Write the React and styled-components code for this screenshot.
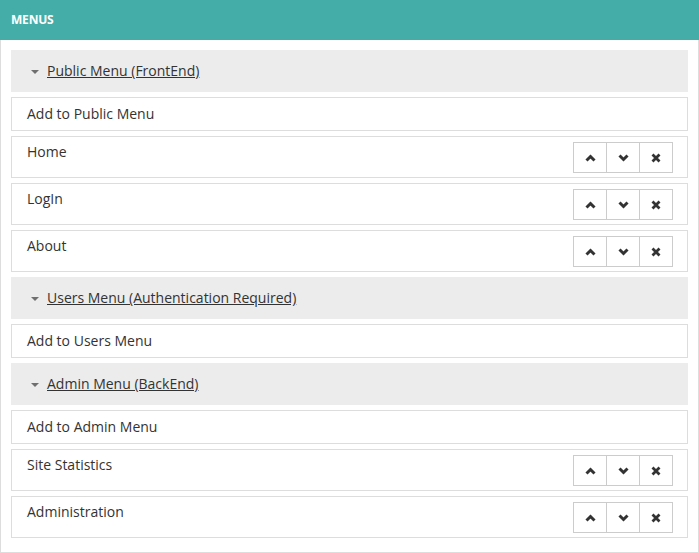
import React from 'react';
import styled, {createGlobalStyle} from 'styled-components';

const GlobalStyle = createGlobalStyle`
    html, body {
        margin: 0;
        padding: 0;
        background: #fff;
    }
    body {
        font-family: "Open Sans", "Noto Sans", sans-serif;
        font-size: 14px;
        line-height: 20px;
        color: #333;
    }
`;

const Panel = styled.div`
    width: 699px;
    height: 553px;
    box-sizing: border-box;
    border: 1px solid #ddd;
    border-top: none;
`;

const Heading = styled.div`
    background: #45ada8;
    color: #fff;
    height: 40px;
    margin: 0 -1px;
    padding: 0 11px;
    display: flex;
    align-items: center;
    font-size: 12px;
    font-weight: 700;
    letter-spacing: -0.2px;
`;

const Body = styled.div`
    padding: 10px;
    display: flex;
    flex-direction: column;
    gap: 5px;
`;

const SectionHead = styled.div`
    background: #ececec;
    height: 42px;
    display: flex;
    align-items: center;
    padding: 0 20px;
    gap: 8px;
`;

const Caret = styled.span`
    width: 0;
    height: 0;
    border-left: 4px solid transparent;
    border-right: 4px solid transparent;
    border-top: 4px solid #6f6f6f;
    margin-top: 1px;
`;

const SectionLink = styled.a`
    color: #333;
    text-decoration: underline;
    cursor: pointer;
`;

const Row = styled.div`
    border: 1px solid #ddd;
    background: #fff;
    box-sizing: border-box;
    height: ${props => props.$add ? '34px' : '42px'};
    padding: ${props => props.$add ? '6px 15px 8px' : '5px 14px 0 15px'};
    display: flex;
    align-items: flex-start;
    justify-content: space-between;
`;

const BtnGroup = styled.div`
    display: flex;
`;

const Btn = styled.button`
    width: 34px;
    height: 31px;
    margin-left: -1px;
    border: 1px solid #ccc;
    background: #fff;
    padding: 0;
    display: flex;
    align-items: center;
    justify-content: center;
    color: #333;
    cursor: pointer;
    &:first-child {
        margin-left: 0;
    }
`;

const UpIcon = () => (
    <svg width="11" height="8" viewBox="0 0 11 8">
        <path d="M1.5 6.5 L5.5 2.5 L9.5 6.5" fill="none" stroke="#333" strokeWidth="3" />
    </svg>
);

const DownIcon = () => (
    <svg width="11" height="8" viewBox="0 0 11 8">
        <path d="M1.5 1.5 L5.5 5.5 L9.5 1.5" fill="none" stroke="#333" strokeWidth="3" />
    </svg>
);

const RemoveIcon = () => (
    <svg width="10" height="10" viewBox="0 0 10 10">
        <path d="M1.5 1.5 L8.5 8.5 M8.5 1.5 L1.5 8.5" fill="none" stroke="#333" strokeWidth="2.8" />
    </svg>
);

const menus = [
    {title: 'Public Menu (FrontEnd)', add: 'Add to Public Menu', items: ['Home', 'LogIn', 'About']},
    {title: 'Users Menu (Authentication Required)', add: 'Add to Users Menu', items: []},
    {title: 'Admin Menu (BackEnd)', add: 'Add to Admin Menu', items: ['Site Statistics', 'Administration']}
];

export default function App() {
    return (
        <>
            <GlobalStyle />
            <Panel>
                <Heading>MENUS</Heading>
                <Body>
                    {menus.map(menu => (
                        <React.Fragment key={menu.title}>
                            <SectionHead>
                                <Caret />
                                <SectionLink>{menu.title}</SectionLink>
                            </SectionHead>
                            <Row $add>{menu.add}</Row>
                            {menu.items.map(item => (
                                <Row key={item}>
                                    <span>{item}</span>
                                    <BtnGroup>
                                        <Btn><UpIcon /></Btn>
                                        <Btn><DownIcon /></Btn>
                                        <Btn><RemoveIcon /></Btn>
                                    </BtnGroup>
                                </Row>
                            ))}
                        </React.Fragment>
                    ))}
                </Body>
            </Panel>
        </>
    );
}
